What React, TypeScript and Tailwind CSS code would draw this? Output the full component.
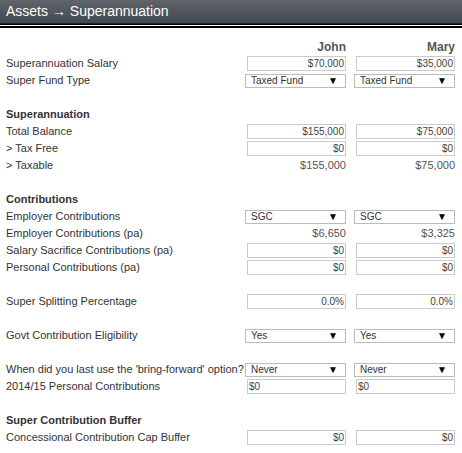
import React from 'react';

type Cell =
  | { kind: 'input'; value: string; align?: 'left' | 'right' }
  | { kind: 'select'; value: string }
  | { kind: 'text'; value: string }
  | { kind: 'head'; value: string };

type Row = { label?: string; bold?: boolean; john?: Cell; mary?: Cell };

const rows: Row[] = [
  { john: { kind: 'head', value: 'John' }, mary: { kind: 'head', value: 'Mary' } },
  { label: 'Superannuation Salary', john: { kind: 'input', value: '$70,000' }, mary: { kind: 'input', value: '$35,000' } },
  { label: 'Super Fund Type', john: { kind: 'select', value: 'Taxed Fund' }, mary: { kind: 'select', value: 'Taxed Fund' } },
  {},
  { label: 'Superannuation', bold: true },
  { label: 'Total Balance', john: { kind: 'input', value: '$155,000' }, mary: { kind: 'input', value: '$75,000' } },
  { label: '> Tax Free', john: { kind: 'input', value: '$0' }, mary: { kind: 'input', value: '$0' } },
  { label: '> Taxable', john: { kind: 'text', value: '$155,000' }, mary: { kind: 'text', value: '$75,000' } },
  {},
  { label: 'Contributions', bold: true },
  { label: 'Employer Contributions', john: { kind: 'select', value: 'SGC' }, mary: { kind: 'select', value: 'SGC' } },
  { label: 'Employer Contributions (pa)', john: { kind: 'text', value: '$6,650' }, mary: { kind: 'text', value: '$3,325' } },
  { label: 'Salary Sacrifice Contributions (pa)', john: { kind: 'input', value: '$0' }, mary: { kind: 'input', value: '$0' } },
  { label: 'Personal Contributions (pa)', john: { kind: 'input', value: '$0' }, mary: { kind: 'input', value: '$0' } },
  {},
  { label: 'Super Splitting Percentage', john: { kind: 'input', value: '0.0%' }, mary: { kind: 'input', value: '0.0%' } },
  {},
  { label: 'Govt Contribution Eligibility', john: { kind: 'select', value: 'Yes' }, mary: { kind: 'select', value: 'Yes' } },
  {},
  { label: "When did you last use the 'bring-forward' option?", john: { kind: 'select', value: 'Never' }, mary: { kind: 'select', value: 'Never' } },
  { label: '2014/15 Personal Contributions', john: { kind: 'input', value: '$0', align: 'left' }, mary: { kind: 'input', value: '$0', align: 'left' } },
  {},
  { label: 'Super Contribution Buffer', bold: true },
  { label: 'Concessional Contribution Cap Buffer', john: { kind: 'input', value: '$0' }, mary: { kind: 'input', value: '$0' } },
];

function CellView({ cell }: { cell?: Cell }) {
  if (!cell) return <div />;
  if (cell.kind === 'head') {
    return <div className="text-right font-bold text-[12px] text-[#555]">{cell.value}</div>;
  }
  if (cell.kind === 'text') {
    return <div className="text-right text-[11px] text-[#555]">{cell.value}</div>;
  }
  if (cell.kind === 'select') {
    return (
      <div className="flex items-center justify-between h-[14px] border border-[#bbb] bg-white pl-[5px] pr-[7px] text-[10px] text-[#333]">
        <span>{cell.value}</span>
        <span className="text-[10px] leading-none text-black">▼</span>
      </div>
    );
  }
  return (
    <div
      className={
        'flex items-center h-[15px] ml-[2px] border border-[#ccc] bg-white px-[1px] text-[10px] text-[#444] ' +
        (cell.align === 'left' ? 'justify-start' : 'justify-end')
      }
    >
      {cell.value}
    </div>
  );
}

export default function App() {
  return (
    <div className="w-[462px] h-[453px] bg-white overflow-hidden" style={{ fontFamily: '"Liberation Sans", Arial, sans-serif' }}>
      <div className="h-[23px] bg-gradient-to-b from-[#60656c] to-[#43484f] flex items-center pl-[6px] text-white text-[14px]">
        Assets → Superannuation
      </div>
      <div className="h-[1px] bg-[#222]" />
      <div className="h-[1px] bg-black" />
      <div className="h-[1px] bg-white" />
      <div className="h-[2px] bg-black" />
      <div className="pt-[10px] pl-[6px] pr-[7px]">
        {rows.map((r, i) => (
          <div key={i} className="grid grid-cols-[minmax(0,1fr)_101px_101px] gap-x-[8px] items-center h-[17px]">
            <div className={'text-[11px] text-[#333] whitespace-nowrap ' + (r.bold ? 'font-bold' : '')}>{r.label}</div>
            <CellView cell={r.john} />
            <CellView cell={r.mary} />
          </div>
        ))}
      </div>
    </div>
  );
}
